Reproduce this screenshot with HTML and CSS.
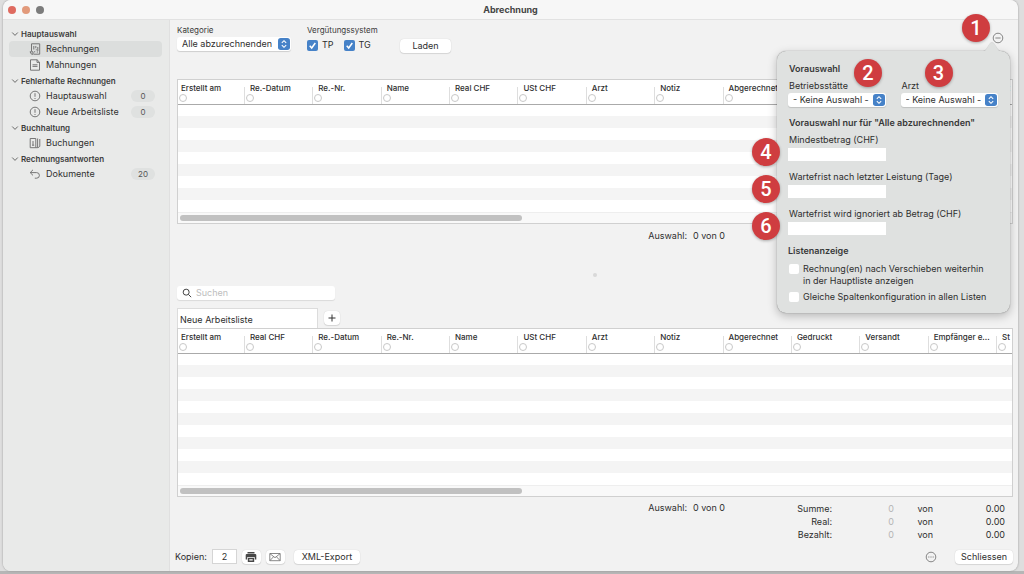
FILE: index.html
```html
<!DOCTYPE html>
<html lang="de">
<head>
<meta charset="utf-8">
<title>Abrechnung</title>
<link rel="stylesheet" href="styles.css">
</head>
<body>
<div class="window">
  <header class="titlebar">
    <div class="lights"><span class="light close"></span><span class="light minimize"></span><span class="light maximize"></span></div>
    <h1 class="title">Abrechnung</h1>
  </header>

  <nav class="sidebar">
    <h2 class="group"><svg class="chevron" viewBox="0 0 8 8"><path d="M1.2 2.5 4 5.4 6.8 2.5"/></svg>Hauptauswahl</h2>
    <a class="item active" href="#"><svg class="icon" viewBox="0 0 12 12"><path d="M2.500 8V.8h8.200v10.400H4.500M1 8.800h3v2.400H2.500zM4.800 3v3.500M6.800 3v2.200M5 8.800h1.200M6.800 6.800h1M8.800 4v4M7.800 9h1.200"/></svg>Rechnungen</a>
    <a class="item" href="#"><svg class="icon" viewBox="0 0 12 12"><path d="M1.5 .8h6.600l2.400 2.400v8H1.500zM8 .8v2.600h2.500M3.500 5.800h5M3.500 7.400h5"/></svg>Mahnungen</a>
    <h2 class="group"><svg class="chevron" viewBox="0 0 8 8"><path d="M1.2 2.5 4 5.4 6.8 2.5"/></svg>Fehlerhafte Rechnungen</h2>
    <a class="item" href="#"><svg class="icon" viewBox="0 0 12 12"><circle cx="6" cy="6" r="4.8"/><path d="M6 3.2v3.6M6 8v1"/></svg>Hauptauswahl<span class="count">0</span></a>
    <a class="item" href="#"><svg class="icon" viewBox="0 0 12 12"><circle cx="6" cy="6" r="4.8"/><path d="M6 3.2v3.6M6 8v1"/></svg>Neue Arbeitsliste<span class="count">0</span></a>
    <h2 class="group"><svg class="chevron" viewBox="0 0 8 8"><path d="M1.2 2.5 4 5.4 6.8 2.5"/></svg>Buchhaltung</h2>
    <a class="item" href="#"><svg class="icon" viewBox="0 0 12 12"><path d="M1.2 1.5h5.600v9.200H1.200zM3 8.200h2.200M4 4v4.200M8.600 1.500v9.200M10.800 2v7.400L9 10.700M6.800 10.700h2"/></svg>Buchungen</a>
    <h2 class="group"><svg class="chevron" viewBox="0 0 8 8"><path d="M1.2 2.5 4 5.4 6.8 2.5"/></svg>Rechnungsantworten</h2>
    <a class="item" href="#"><svg class="icon" viewBox="0 0 12 12"><path d="M4 1.800 1.200 4.600 4 7.400M1.400 4.600h6.200a2.700 2.700 0 0 1 0 5.600H5.800"/></svg>Dokumente<span class="count">20</span></a>
  </nav>

  <main class="content">
    <div class="toolbar">
      <div class="category">
        <label class="caption" for="category">Kategorie</label>
        <span class="picker"><select id="category"><option>Alle abzurechnenden</option></select><svg class="stepper" viewBox="0 0 11 11"><rect width="11" height="11" rx="2.5"/><path d="M3.5 4.4 5.5 2.5l2 1.9M3.5 6.6l2 1.9 2-1.9"/></svg></span>
      </div>
      <fieldset class="system">
        <legend class="caption">Vergütungssystem</legend>
        <div class="checks">
          <label class="check"><input type="checkbox" checked>TP</label>
          <label class="check"><input type="checkbox" checked>TG</label>
        </div>
      </fieldset>
      <button class="button load" type="button">Laden</button>
      <div class="options">
        <button class="more" type="button" aria-label="Optionen"><svg viewBox="0 0 12 12"><circle cx="6" cy="6" r="4.8"/><path d="M3.4 6h5.2"/></svg></button>
        <span class="marker m1">1</span>
        <section class="popover">
          <svg class="arrow" viewBox="0 0 20 10"><path d="M0 10C3 10 4 8 8 2Q10 0 12 2C16 8 17 10 20 10z"/></svg>
          <h3 class="heading">Vorauswahl</h3>
          <div class="pair">
            <div class="field">
              <label for="site">Betriebsstätte</label>
              <span class="picker"><select id="site"><option>- Keine Auswahl -</option></select><svg class="stepper" viewBox="0 0 11 11"><rect width="11" height="11" rx="2.5"/><path d="M3.5 4.4 5.5 2.5l2 1.9M3.5 6.6l2 1.9 2-1.9"/></svg></span>
              <span class="marker above site">2</span>
            </div>
            <div class="field">
              <label for="doctor">Arzt</label>
              <span class="picker"><select id="doctor"><option>- Keine Auswahl -</option></select><svg class="stepper" viewBox="0 0 11 11"><rect width="11" height="11" rx="2.5"/><path d="M3.5 4.4 5.5 2.5l2 1.9M3.5 6.6l2 1.9 2-1.9"/></svg></span>
              <span class="marker above doctor">3</span>
            </div>
          </div>
          <h3 class="heading second">Vorauswahl nur für "Alle abzurechnenden"</h3>
          <div class="field amount"><label for="min">Mindestbetrag (CHF)</label><input class="entry" id="min" type="text"><span class="marker beside">4</span></div>
          <div class="field amount"><label for="wait">Wartefrist nach letzter Leistung (Tage)</label><input class="entry" id="wait" type="text"><span class="marker beside">5</span></div>
          <div class="field amount"><label for="ignore">Wartefrist wird ignoriert ab Betrag (CHF)</label><input class="entry" id="ignore" type="text"><span class="marker beside">6</span></div>
          <h3 class="heading third">Listenanzeige</h3>
          <label class="setting"><input type="checkbox"><span>Rechnung(en) nach Verschieben weiterhin<br>in der Hauptliste anzeigen</span></label>
          <label class="setting"><input type="checkbox"><span>Gleiche Spaltenkonfiguration in allen Listen</span></label>
        </section>
      </div>
    </div>

    <div class="listbox">
      <table class="list">
        <thead><tr><th>Erstellt am<i></i></th><th>Re.-Datum<i></i></th><th>Re.-Nr.<i></i></th><th>Name<i></i></th><th>Real CHF<i></i></th><th>USt CHF<i></i></th><th>Arzt<i></i></th><th>Notiz<i></i></th><th>Abgerechnet<i></i></th><th></th><th></th><th></th><th>St<i></i></th></tr></thead>
        <tbody>
          <tr><td colspan="13"></td></tr><tr><td colspan="13"></td></tr><tr><td colspan="13"></td></tr>
          <tr><td colspan="13"></td></tr><tr><td colspan="13"></td></tr><tr><td colspan="13"></td></tr>
          <tr><td colspan="13"></td></tr><tr><td colspan="13"></td></tr><tr><td colspan="13"></td></tr>
        </tbody>
      </table>
      <div class="track"><div class="thumb"></div></div>
    </div>
    <div class="status upper"><p class="selection"><span>Auswahl:</span><span>0 von 0</span></p></div>
    <div class="splitter"></div>

    <label class="search"><svg viewBox="0 0 12 12"><circle cx="5" cy="5" r="3.6"/><path d="m7.700 7.700 3.300 3.300"/></svg><input type="search" placeholder="Suchen" aria-label="Suchen"></label>
    <div class="tabs">
      <button class="tab" type="button">Neue Arbeitsliste</button>
      <button class="button add" type="button" aria-label="Neue Liste"><svg viewBox="0 0 10 10"><path d="M5 1.500v7M1.500 5h7"/></svg></button>
    </div>
    <div class="listbox">
      <table class="list">
        <thead><tr><th>Erstellt am<i></i></th><th>Real CHF<i></i></th><th>Re.-Datum<i></i></th><th>Re.-Nr.<i></i></th><th>Name<i></i></th><th>USt CHF<i></i></th><th>Arzt<i></i></th><th>Notiz<i></i></th><th>Abgerechnet<i></i></th><th>Gedruckt<i></i></th><th>Versandt<i></i></th><th>Empfänger e...<i></i></th><th>St<i></i></th></tr></thead>
        <tbody>
          <tr><td colspan="13"></td></tr><tr><td colspan="13"></td></tr><tr><td colspan="13"></td></tr>
          <tr><td colspan="13"></td></tr><tr><td colspan="13"></td></tr><tr><td colspan="13"></td></tr>
          <tr><td colspan="13"></td></tr><tr><td colspan="13"></td></tr><tr><td colspan="13"></td></tr>
          <tr><td colspan="13"></td></tr><tr><td colspan="13"></td></tr>
        </tbody>
      </table>
      <div class="track"><div class="thumb"></div></div>
    </div>
    <div class="status">
      <p class="selection"><span>Auswahl:</span><span>0 von 0</span></p>
      <table class="totals">
        <tr><th>Summe:</th><td class="part">0</td><td class="of">von</td><td>0.00</td></tr>
        <tr><th>Real:</th><td class="part">0</td><td class="of">von</td><td>0.00</td></tr>
        <tr><th>Bezahlt:</th><td class="part">0</td><td class="of">von</td><td>0.00</td></tr>
      </table>
    </div>

    <footer class="footer">
      <label for="copies">Kopien:</label>
      <input class="copies" id="copies" type="text" value="2">
      <button class="button small" type="button" aria-label="Drucken"><svg class="printer" viewBox="0 0 12 12"><path d="M2.500 1h7v1.400h-7zM1.800 3h8.400Q11.300 3 11.300 4.100v4.300H9.900V6.300H2.100v2.100H.7V4.100Q.7 3 1.800 3z"/><path d="M2.800 7h6.400v4H2.800zM4.300 8v.8h3.400V8zM4.300 9.500v.6h3.400v-.6z" fill-rule="evenodd"/></svg></button>
      <button class="button small mail" type="button" aria-label="Mail"><svg viewBox="0 0 12 12"><path d="M.8 2.500h10.400v7.200H.8zM1 2.700l5 4 5-4M1 9.500l3.500-3.700M11 9.500 7.500 5.800"/></svg></button>
      <button class="button export" type="button">XML-Export</button>
      <button class="more lower" type="button" aria-label="Mehr"><svg viewBox="0 0 12 12"><circle cx="6" cy="6" r="4.800"/><path d="M3.200 6h1.200M5.400 6h1.200M7.600 6h1.200"/></svg></button>
      <button class="button" type="button">Schliessen</button>
    </footer>
  </main>
</div>
</body>
</html>
```
FILE: styles.css
```css
* { box-sizing: border-box; }
body {
  margin: 0;
  min-height: 100vh;
  padding: 0 6px 3px 3px;
  display: flex;
  background: linear-gradient(to top, #b6b6b6 3px, transparent 3px), #dedede;
  font-family: Inter, "Liberation Sans", sans-serif;
  font-size: 9px;
  line-height: 12px;
  color: #2e2e2e;
}
h1, h2, h3, p { margin: 0; font-size: inherit; }
button, input, select { font: inherit; color: inherit; margin: 0; padding: 0; border: 0; }
svg { display: block; fill: none; stroke: #6a6a6a; flex: none; }

.window {
  flex: 1;
  min-width: 0;
  display: grid;
  grid-template: 20px 1fr / 167px 1fr;
  background: #f2f2f2;
  border-radius: 8px;
  box-shadow: 0 0 2px #8c8c8c;
}
.titlebar {
  grid-column: 1 / 3;
  display: grid;
  grid-template-columns: 1fr auto 1fr;
  align-items: center;
  background: #f7f7f7;
  border-bottom: 1px solid #e2e2e2;
  border-radius: 8px 8px 0 0;
}
.lights { display: flex; gap: 6px; padding-left: 5px; }
.light { width: 8px; height: 8px; border-radius: 50%; }
.close { background: #df6b60; }
.minimize { background: #e29a7b; }
.maximize { background: #7c7c7c; }
.title { font-weight: 700; color: #444; }

.sidebar {
  background: #e9eae9;
  border-right: 1px solid #e0e0e0;
  border-radius: 0 0 0 8px;
  padding: 6px 7px 0 6px;
}
.group {
  height: 15px;
  padding-left: 2px;
  display: flex;
  align-items: center;
  gap: 2px;
  font-size: 8px;
  font-weight: 600;
  color: #3c3c3c;
}
.chevron { width: 8px; height: 8px; }
.item {
  height: 16px;
  padding: 0 7px 0 20px;
  display: flex;
  align-items: center;
  gap: 5px;
  border-radius: 4px;
  color: #303030;
  text-decoration: none;
}
.active { background: #dcdedd; }
.icon { width: 12px; height: 12px; stroke-width: .9; }
.count {
  width: 24px;
  margin-left: auto;
  border-radius: 6px;
  background: #dfe1e0;
  font-size: 8px;
  text-align: center;
  color: #555;
}

.content { min-width: 0; padding: 4px 5px 7px 7px; display: flex; flex-direction: column; }
.toolbar { height: 55px; display: flex; align-items: flex-start; }
.caption { display: block; padding: 0; font-size: 8px; color: #3a3a3a; }
.category { width: 114px; }
.picker {
  height: 14px;
  display: flex;
  position: relative;
  background: #fff;
  border-radius: 3px;
  box-shadow: 0 1px 1px #00000026;
}
.picker select { appearance: none; width: 100%; background: none; padding: 0 16px 0 5px; }
.category .picker { margin-top: 1px; }
.stepper { position: absolute; right: 1px; top: 1px; width: 12px; height: 12px; pointer-events: none; stroke: #fff; }
.stepper rect { fill: #4682c8; stroke: none; }
.system { margin: 0 0 0 16px; padding: 0; border: 0; width: 93px; }
.checks { display: flex; gap: 10px; padding-top: 3px; }
.check { display: flex; align-items: center; gap: 4px; }
input[type="checkbox"] { appearance: none; flex: none; width: 10px; height: 10px; border-radius: 2px; background: #fff; }
input[type="checkbox"]:checked {
  width: 11px;
  height: 11px;
  background: #4682c8 url('data:image/svg+xml,<svg xmlns="http://www.w3.org/2000/svg" viewBox="0 0 11 11"><path d="M2.700 5.800 4.700 8 8.300 3" fill="none" stroke="white" stroke-width="1.500"/></svg>');
}
.button {
  height: 14px;
  padding: 0 6px;
  display: flex;
  align-items: center;
  justify-content: center;
  background: #fff;
  border-radius: 4px;
  box-shadow: 0 0 1px #00000033, 0 1px 1px #0000001a;
}
.load { width: 51px; margin-top: 15px; }
.options { position: relative; margin: 8px 9px 0 auto; }
.more { display: block; background: none; }
.more svg { width: 12px; height: 12px; stroke-width: .8; }

.popover {
  position: absolute;
  z-index: 1;
  top: 19px;
  right: -6px;
  width: 233px;
  padding: 12px 12px 10px 11px;
  background: #dfe1e0;
  border-radius: 9px;
  box-shadow: 0 0 1px #00000080, 0 3px 10px #00000040;
}
.arrow { position: absolute; top: -9px; right: 8px; width: 20px; height: 10px; fill: #dfe1e0; stroke: none; filter: drop-shadow(0 -1px 0 #0000001a); }
.heading { padding-left: 1px; font-weight: 600; color: #383838; }
.pair { display: grid; grid-template-columns: 1fr 1fr; gap: 15px; margin-top: 5px; }
.field { position: relative; }
.field label { display: block; padding-left: 1px; margin-bottom: 1px; }
.second { margin: 10px 0 5px; }
.amount { margin-bottom: 10px; }
.entry { display: block; width: 98px; height: 13px; padding: 0 3px; background: #fff; margin-top: 2px; }
.third { margin-bottom: 6px; padding-left: 0; }
.setting { display: flex; align-items: flex-start; gap: 4px; padding-left: 1px; margin-bottom: 4px; }
.setting input { margin-top: 1px; }
.setting:last-child { margin-bottom: 0; }
.marker {
  position: absolute;
  z-index: 2;
  width: 28px;
  height: 28px;
  border-radius: 50%;
  background: #cf3d40;
  color: #fff;
  font: 500 20px/28px Roboto, sans-serif;
  text-align: center;
  box-shadow: 0 1px 3px #0000004d;
}
.m1 { top: -18px; right: 14px; }
.above { top: -21px; }
.site { left: 66px; }
.doctor { left: 24px; }
.beside { top: 4px; left: -36px; }

.listbox { background: #fff; border: 1px solid #d0d0d0; overflow: hidden; }
.list { width: 100%; border-collapse: collapse; table-layout: fixed; }
.list th {
  position: relative;
  width: 8.2%;
  height: 24px;
  padding: 2px 0 0 3px;
  vertical-align: top;
  text-align: left;
  white-space: nowrap;
  font-size: 8px;
  font-weight: 500;
  border-bottom: 1px solid #aaa;
}
.list th:first-child { width: 7.9%; }
.list th:last-child { width: auto; overflow: hidden; }
.list th + th { padding-left: 6px; }
.list th + th::before { content: ""; position: absolute; left: 0; bottom: 0; width: 1px; height: 17px; background: #dedede; }
.list i { position: absolute; left: 1px; bottom: 2px; width: 8px; height: 8px; border: 1px solid #c8c8c8; border-radius: 50%; }
.list th + th i { left: 2px; }
.list td { height: 12px; padding: 0; }
.list tbody tr:nth-child(even) { background: #f4f4f4; }
.track { padding: 2px 2px 2px; background: #f9f9f9; border-top: 1px solid #eee; }
.thumb { width: 41.2%; height: 6px; border-radius: 3px; background: #c1c1c1; }

.status { display: flex; justify-content: flex-end; padding: 5px 8px 0 0; }
.selection { display: flex; gap: 6px; margin-right: 65px; }
.upper { padding: 6px 223px 0 0; }
.splitter { width: 4px; height: 4px; border-radius: 50%; background: #d9d9d9; margin: 31px auto 9px; }
.search {
  width: 158px;
  height: 14px;
  display: flex;
  align-items: center;
  gap: 4px;
  padding: 0 5px;
  background: #fff;
  border-radius: 3px;
  box-shadow: 0 1px 1px #0000001a;
}
.search svg { width: 10px; height: 10px; stroke: #444; stroke-width: 1.2; }
.search input { appearance: none; flex: 1; min-width: 0; background: none; }
.search input::placeholder { color: #bdbdbd; }
.tabs { display: flex; gap: 6px; margin-top: 8px; align-items: flex-start; }
.tab { width: 141px; height: 20px; padding: 2px 2px 0; text-align: left; background: #fff; border: solid #dcdcdc; border-width: 1px 1px 0; }
.add { width: 16px; margin-top: 3px; padding: 0; }
.add svg { width: 10px; height: 10px; stroke: #333; }

.totals { width: 215px; border-collapse: collapse; table-layout: fixed; }
.totals th, .totals td { height: 13px; padding: 0; font-weight: 400; text-align: right; }
.totals th { width: 42px; }
.totals .part { width: 62px; color: #b5b5b5; }
.totals .of { width: 39px; }
.footer { margin: auto 0 0 -2px; display: flex; align-items: center; gap: 5px; }
.copies { width: 25px; height: 15px; background: #fff; border: 1px solid #d5d5d5; text-align: center; }
.small { width: 19px; padding: 0; }
.small svg { width: 12px; height: 12px; stroke-width: .8; }
.small .printer { fill: #484848; stroke: none; }
.mail { margin-right: 4px; }
.export { width: 66px; }
.lower { margin: 0 13px 0 auto; }
```
